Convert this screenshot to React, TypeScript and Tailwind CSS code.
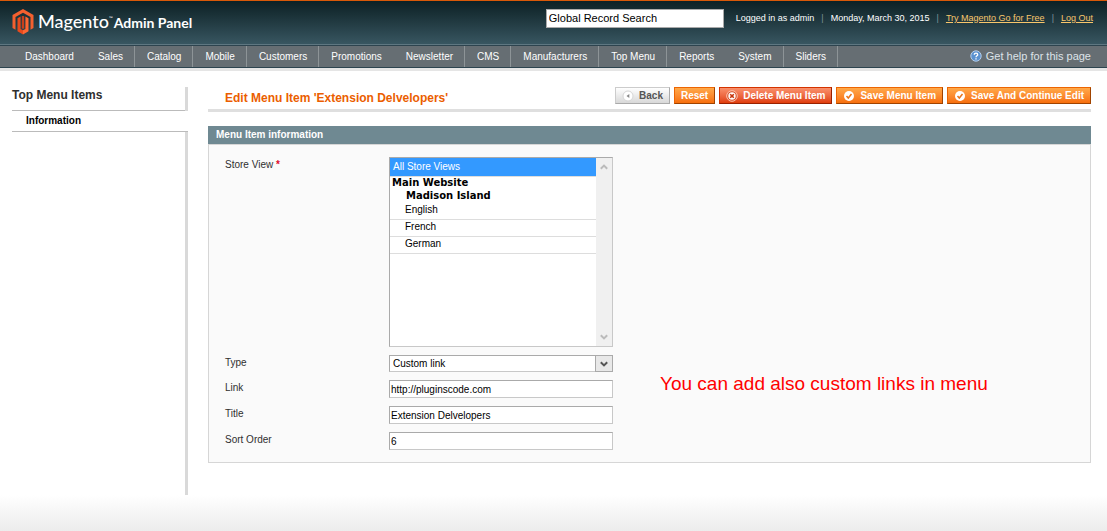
import React, { useState } from "react";

const NAV_ITEMS = [
    { label: "Dashboard", divider: false },
    { label: "Sales", divider: true },
    { label: "Catalog", divider: true },
    { label: "Mobile", divider: true },
    { label: "Customers", divider: true },
    { label: "Promotions", divider: false },
    { label: "Newsletter", divider: true },
    { label: "CMS", divider: true },
    { label: "Manufacturers", divider: true },
    { label: "Top Menu", divider: true },
    { label: "Reports", divider: false },
    { label: "System", divider: true },
    { label: "Sliders", divider: true },
];

const STORE_VIEWS = ["English", "French", "German"];

const INPUT = "h-[18px] w-56 border border-[#aaa] border-r-[#c8c8c8] border-b-[#c8c8c8] bg-white px-px text-[10px] text-black outline-none";

function Logo() {
    return (
        <a href="#" className="flex items-center gap-1 text-white" aria-label="Magento Admin Panel">
            <svg width="22" height="26" viewBox="0 0 22 26">
                <path d="M11 0 .5 6v13l3 1.8V8L11 3.700 18.500 8v12.800l3-1.800V6z" fill="#f4602f" />
                <path d="M5.500 9.300v12.900L11 25.500V21.300L8.600 20V7.500z" fill="#e94a1c" />
                <path d="M16.500 9.300v12.900L11 25.500V21.300l2.400-1.300V7.500z" fill="#ff6632" />
                <path d="M9.800 7h2.400v12.300l-1.200.7-1.200-.7z" fill="#c93f1b" />
            </svg>
            <span className="flex items-baseline font-[Lato,sans-serif] leading-6">
                <span className="text-[18px] font-medium">Magento</span>
                <span className="mb-2 self-center text-[5px] leading-none">™</span>
                <span className="ml-px text-[14px] font-bold">Admin Panel</span>
            </span>
        </a>
    );
}

function CheckIcon() {
    return (
        <svg width="12" height="12" viewBox="0 0 12 12">
            <circle cx="6" cy="6" r="5" fill="#fff" />
            <path d="M3.500 6 5.300 8 8.500 4" fill="none" stroke="#e8741c" strokeWidth="1.500" />
        </svg>
    );
}

function DeleteIcon() {
    return (
        <svg width="12" height="12" viewBox="0 0 12 12">
            <circle cx="6" cy="6" r="5.300" fill="#d9532b" stroke="#fbc3ae" />
            <circle cx="6" cy="6" r="3.700" fill="#fff" />
            <path d="m4.200 4.200 3.600 3.600M7.800 4.200 4.200 7.800" stroke="#c5330a" strokeWidth="1.600" />
        </svg>
    );
}

function BackIcon() {
    return (
        <svg width="12" height="12" viewBox="0 0 12 12">
            <circle cx="6" cy="6" r="5" fill="#fff" stroke="#d6d6d6" />
            <path d="M7.300 4v4L4.500 6z" fill="#888" />
        </svg>
    );
}

function HelpIcon() {
    return (
        <svg width="12" height="12" viewBox="0 0 12 12">
            <circle cx="6" cy="6" r="5.200" fill="#5b92d0" stroke="#b3cdea" />
            <path d="M4.300 4.700c0-2.200 3.400-2.200 3.400 0C7.700 5.900 6 5.800 6 7.200M6 8.200v1.200" fill="none" stroke="#fff" strokeWidth="1.300" />
        </svg>
    );
}

function Chevron({ up = false }: { up?: boolean }) {
    return (
        <svg width="8" height="6" viewBox="0 0 8 6">
            <path d={up ? "M.8 4.800 4 1.600l3.200 3.200" : "M.8 1.200 4 4.400l3.200-3.200"} fill="none" stroke="currentColor" strokeWidth="2" />
        </svg>
    );
}

interface ButtonProps {
    tone: "gray" | "orange" | "red";
    icon?: React.ReactNode;
    children: React.ReactNode;
}

function Button({ tone, icon, children }: ButtonProps) {
    const tones = {
        gray: "border-[#ccc] border-r-[#aaa] border-b-[#aaa] bg-linear-to-b from-white to-[#d8d8d8] text-[#555]",
        orange: "border-[#ed6502] border-r-[#a04300] border-b-[#a04300] bg-linear-to-b from-[#ffa848] to-[#f76f0a] text-white",
        red: "border-[#d43300] border-r-[#992000] border-b-[#992000] bg-linear-to-b from-[#f9906b] to-[#e03c05] text-white",
    };
    return (
        <button type="button" className={`flex h-[17px] items-center gap-[5px] border px-1.5 text-[10px] leading-none font-bold ${tones[tone]}`}>
            {icon}
            <span>{children}</span>
        </button>
    );
}

function Field({ id, label, children, required = false }: { id: string; label: string; children: React.ReactNode; required?: boolean }) {
    return (
        <div className="flex items-start">
            <label htmlFor={id} className="w-41 shrink-0 text-[10px] leading-4 text-[#2f2f2f]">
                {label} {required && <span className="font-bold text-[#e00b2a]">*</span>}
            </label>
            {children}
        </div>
    );
}

export default function App() {
    const [link, setLink] = useState("http://pluginscode.com");
    const [title, setTitle] = useState("Extension Delvelopers");
    const [sortOrder, setSortOrder] = useState("6");

    return (
        <div className="flex min-h-screen flex-col bg-white font-['Liberation_Sans',Arial,sans-serif] text-[10px]">
            <header className="flex h-11 items-start justify-between border-t border-[#d85909] bg-linear-to-b from-[#0d2125] to-[#385661] px-3">
                <div className="pt-2">
                    <Logo />
                </div>
                <div className="flex items-center pt-2 pr-0.5">
                    <input
                        type="text"
                        aria-label="Global Record Search"
                        defaultValue="Global Record Search"
                        className="mr-3 h-[19px] w-[178px] border border-[#aaa] bg-white px-0.5 pb-0.5 text-[11px] text-black outline-none"
                    />
                    <div className="flex items-center gap-[7px] text-[9px] text-white">
                        <span>Logged in as admin</span>
                        <span className="text-[#7e949b]">|</span>
                        <span>Monday, March 30, 2015</span>
                        <span className="text-[#7e949b]">|</span>
                        <a href="#" className="text-[#f8c66b] underline">Try Magento Go for Free</a>
                        <span className="text-[#7e949b]">|</span>
                        <a href="#" className="text-[#f8c66b] underline">Log Out</a>
                    </div>
                </div>
            </header>

            <nav className="flex h-6 items-center justify-between border-t border-b border-t-[#5e7781] border-b-[#2d444f] bg-[#666e73] text-white shadow-[inset_0_1px_#2d444f]">
                <ul className="flex h-full pt-px pl-[13px]">
                    {NAV_ITEMS.map((item) => (
                        <li key={item.label} className={`flex items-center border-r pr-[11px] pl-3 ${item.divider ? "border-[#8d9497]" : "border-transparent"}`}>
                            <a href="#">{item.label}</a>
                        </li>
                    ))}
                </ul>
                <a href="#" className="mr-4 flex items-center gap-1 text-[11px] text-[#dde3e8]">
                    <HelpIcon />
                    Get help for this page
                </a>
            </nav>
            <div className="h-[3px] bg-[#e5e5e5]" />

            <div className="flex flex-1 items-start bg-linear-to-t from-[#ececec] to-white to-[36px] pt-4 pr-4 pl-3">
                <aside className="h-[408px] w-44 shrink-0 border-r-[3px] border-[#d9d9d9]">
                    <h3 className="h-6 border-b border-[#bbb] text-[12px] leading-4 font-bold text-[#2f2f2f]">Top Menu Items</h3>
                    <a href="#" className="-mr-[3px] block border-b border-[#bbb] bg-white pl-3.5 leading-5 font-bold text-black">
                        Information
                    </a>
                </aside>

                <main className="ml-5 min-w-0 flex-1">
                    <div className="flex h-[25px] items-start justify-between border-b-[3px] border-[#dfdfdf] pl-[17px]">
                        <h1 className="text-[12px] leading-[22px] font-bold text-[#eb5e00]">Edit Menu Item 'Extension Delvelopers'</h1>
                        <div className="flex gap-1">
                            <Button tone="gray" icon={<BackIcon />}>Back</Button>
                            <Button tone="orange">Reset</Button>
                            <Button tone="red" icon={<DeleteIcon />}>Delete Menu Item</Button>
                            <Button tone="orange" icon={<CheckIcon />}>Save Menu Item</Button>
                            <Button tone="orange" icon={<CheckIcon />}>Save And Continue Edit</Button>
                        </div>
                    </div>

                    <h2 className="mt-3.5 bg-[#6f8992] pl-2 leading-[18px] font-bold text-white">Menu Item information</h2>
                    <form className="flex items-center border border-[#d6d6d6] bg-[#fafafa] px-4 py-3">
                        <div className="flex flex-col gap-2">
                            <Field id="store-view" label="Store View" required>
                                <div className="flex h-[190px] w-56 border border-[#aaa] border-r-[#c8c8c8] border-b-[#c8c8c8] bg-white">
                                    <select
                                        id="store-view"
                                        multiple
                                        defaultValue={["0"]}
                                        className="h-full flex-1 overflow-hidden p-0 text-[10px] text-black outline-none"
                                    >
                                        <option value="0" className="h-[19px] border-b border-[#ddd] p-0 pt-[3px] pl-[3px] checked:bg-linear-to-r checked:from-[#3399ff] checked:to-[#3399ff] checked:[-webkit-text-fill-color:white]">
                                            All Store Views
                                        </option>
                                        <optgroup label="Main Website" className="font-['DejaVu_Sans',sans-serif] text-[10px] leading-3 font-bold" />
                                        <optgroup label={"\u00a0\u00a0\u00a0\u00a0Madison Island"} className="font-['DejaVu_Sans',sans-serif] text-[10px] leading-3 font-bold">
                                            {STORE_VIEWS.map((view) => (
                                                <option
                                                    key={view}
                                                    value={view}
                                                    className="h-[17px] border-b border-[#ddd] p-0 pt-px pl-[15px] font-['Liberation_Sans',Arial,sans-serif] font-normal before:content-['']"
                                                >
                                                    {view}
                                                </option>
                                            ))}
                                        </optgroup>
                                    </select>
                                    <div className="flex w-4 flex-col items-center justify-between bg-[#f0f0f0] py-1.5 text-[#bbb]">
                                        <Chevron up />
                                        <Chevron />
                                    </div>
                                </div>
                            </Field>
                            <Field id="type" label="Type">
                                <div className="relative">
                                    <select id="type" className="h-[17px] w-56 appearance-none border border-[#aaa] border-r-[#c8c8c8] border-b-[#c8c8c8] bg-white pl-[3px] text-[10px] text-black outline-none">
                                        <option>Custom link</option>
                                    </select>
                                    <span className="pointer-events-none absolute inset-y-0 right-0 flex w-[18px] items-center justify-center border border-[#aaa] bg-[#e8e8e8] text-[#555]">
                                        <Chevron />
                                    </span>
                                </div>
                            </Field>
                            <Field id="link" label="Link">
                                <input id="link" type="text" value={link} onChange={(e) => setLink(e.target.value)} className={INPUT} />
                            </Field>
                            <Field id="title" label="Title">
                                <input id="title" type="text" value={title} onChange={(e) => setTitle(e.target.value)} className={INPUT} />
                            </Field>
                            <Field id="sort-order" label="Sort Order">
                                <input id="sort-order" type="text" value={sortOrder} onChange={(e) => setSortOrder(e.target.value)} className={INPUT} />
                            </Field>
                        </div>
                        <p className="mt-[162px] ml-[47px] text-[19px] text-[#f00]">You can add also custom links in menu</p>
                    </form>
                </main>
            </div>
        </div>
    );
}
